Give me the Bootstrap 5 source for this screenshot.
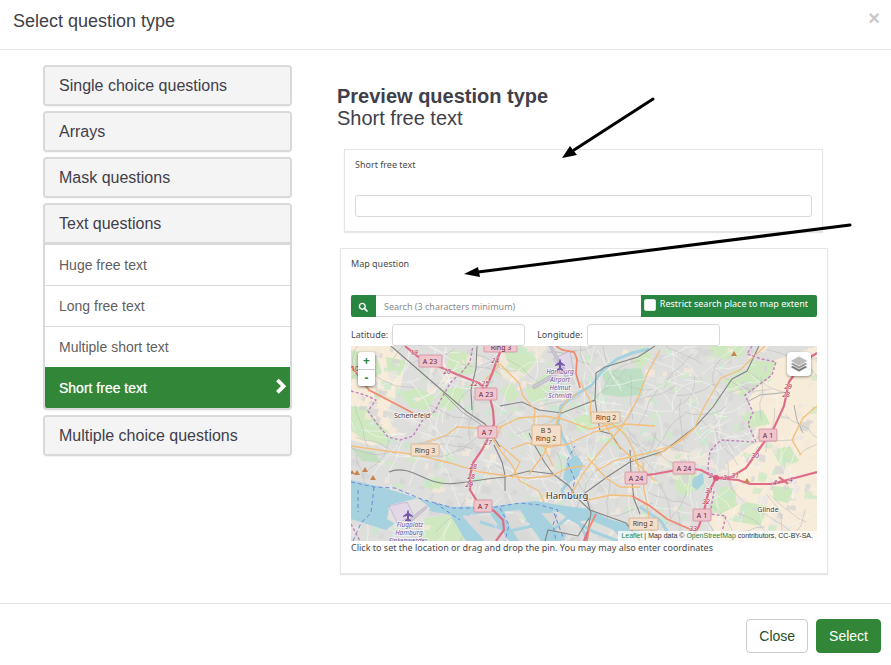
<!DOCTYPE html>
<html lang="en">
<head>
<meta charset="utf-8">
<meta name="viewport" content="width=device-width, initial-scale=1">
<title>Select question type</title>
<link href="https://cdn.jsdelivr.net/npm/bootstrap@5.3.0/dist/css/bootstrap.min.css" rel="stylesheet">
<style>
  body { font-family: "Liberation Sans", Arial, sans-serif; font-size: 14px; color: #41404a; background: #fff; }
  h1, h2, h3, p { margin: 0; }
  .dialog-head { padding: 9px 11px 16px 13px; border-bottom: 1px solid #e5e5e5; }
  .dialog-head h1 { font-size: 18px; line-height: 24px; font-weight: 400; }
  .close-x { border: 0; background: none; padding: 0; font-size: 20px; line-height: 18px; font-weight: 700; color: #c9c9c9; }
  .dialog-main { padding: 15px 0 29px; }
  .type-col { padding-left: 43px; padding-right: 5px; }
  .preview-col { padding: 20px 63px 0 40px; }
  .type-group { border: 2px solid #d9d9d9; border-radius: 4px; box-shadow: 0 1px 1px #0000000d; margin-bottom: 5px; overflow: hidden; }
  .type-toggle { display: block; width: 100%; border: 0; background: #f4f4f4; text-align: left; font-size: 16px; line-height: 22px; padding: 8px 14px 7px; color: #41404a; }
  .type-open .type-toggle { border-bottom: 3px solid #d9d9d9; }
  .type-open .list-group-item { border-color: #d9d9d9; color: #5f5f5f; padding: 10px 3px 10px 14px; line-height: 20px; }
  .type-open .list-group-item.active { background: #328637; border-color: #328637; color: #fff; text-shadow: 0 0 1px #ffffff99; }
  .preview-col h2 { font-size: 20px; line-height: 22px; font-weight: 700; }
  .preview-col h3 { font-size: 20px; line-height: 22px; font-weight: 400; }
  .sample { font-family: "Noto Sans", sans-serif; font-size: 9px; line-height: 14px; color: #4a4a4a; border: 1px solid #e6e6e6; box-shadow: 0 1px 1px #00000018; }
  .sample-text { margin: 20px 5px 16px 7px; padding: 8px 10px 14px; }
  .sample-map { margin-left: 3px; padding: 8px 10px 18px; }
  .sample input[type=text] { font-size: 9px; line-height: 14px; height: 22px; padding: 3px 8px; border: 1px solid #d9d9d9; border-radius: 3px; min-width: 0; color: #555; background: #fff; }
  .sample input::placeholder { color: #8a8a8a; }
  .sample-text input { margin-top: 23px; }
  .search-row { margin-top: 24px; }
  .sample .search-row input[type=text] { border-radius: 0; border-left: 0; border-right: 0; }
  .search-btn { width: 25px; border: 0; padding: 0; background: #298641; border-radius: 2px 0 0 2px; }
  .restrict { background: #298641; color: #fff; padding: 2px 9px 4px 3px; border-radius: 0 2px 2px 0; }
  .restrict input { appearance: none; width: 12px; height: 12px; margin: 2px 4px 0 0; background: #fff; border: 1px solid #dfe9df; border-radius: 2px; }
  .coord-row { padding: 7px 0 0; }
  .coord-row input { width: 133px; }
  .map-box { height: 195px; overflow: hidden; }
  .map-box > svg { width: 100%; height: 195px; }
  .zoom-ctl { position: absolute; left: 7px; top: 6px; width: 17px; border-radius: 3px; overflow: hidden; box-shadow: 0 1px 3px #00000088; }
  .zoom-ctl button { border: 0; background: #fff; color: #298641; font-weight: 700; font-size: 12px; line-height: 16px; height: 17px; padding: 0; }
  .zoom-ctl button + button { border-top: 1px solid #ccc; }
  .layer-btn { position: absolute; right: 6px; top: 6px; width: 24px; height: 24px; border: 0; padding: 0; border-radius: 4px; background: #fff; box-shadow: 0 1px 3px #00000066; }
  .credit { position: absolute; right: 0; bottom: 0; font: 7px/10px "Liberation Sans", Arial, sans-serif; background: #ffffffb8; padding: 0 4px 0 3px; color: #333; }
  .credit a { color: #298641; text-decoration: none; }
  .pointers { position: absolute; left: 0; top: 0; width: 594px; height: 240px; pointer-events: none; overflow: visible; }
  .dialog-foot { border-top: 1px solid #e5e5e5; padding: 15px 10px 12px; }
  .dialog-foot .btn { font-size: 14px; line-height: 20px; padding: 6px 12px; border-radius: 4px; }
  .dialog-foot .btn-close-dialog { border-color: #ccc; color: #274e29; background: #fff; }
  .dialog-foot .btn-select { background: #328637; border-color: #328637; color: #fff; }
</style>
<script src="https://cdn.jsdelivr.net/npm/bootstrap@5.3.0/dist/js/bootstrap.bundle.min.js"></script>
</head>
<body>
<header class="dialog-head d-flex justify-content-between align-items-start">
  <h1>Select question type</h1>
  <button class="close-x" type="button" aria-label="Close dialog">×</button>
</header>

<main class="dialog-main row g-0">
  <nav class="type-col col-4" aria-label="Question types">
    <div class="type-group"><button class="type-toggle" type="button">Single choice questions</button></div>
    <div class="type-group"><button class="type-toggle" type="button">Arrays</button></div>
    <div class="type-group"><button class="type-toggle" type="button">Mask questions</button></div>
    <div class="type-group type-open">
      <button class="type-toggle" type="button" aria-expanded="true">Text questions</button>
      <div class="list-group list-group-flush">
        <a href="#" class="list-group-item">Huge free text</a>
        <a href="#" class="list-group-item">Long free text</a>
        <a href="#" class="list-group-item">Multiple short text</a>
        <a href="#" class="list-group-item active d-flex justify-content-between">Short free text
          <svg width="13" height="17" viewBox="0 0 13 17" aria-hidden="true"><path d="M3.400 2L9.600 8.200L3.400 14.400" fill="none" stroke="#fff" stroke-width="3.800"/></svg></a>
      </div>
    </div>
    <div class="type-group"><button class="type-toggle" type="button">Multiple choice questions</button></div>
  </nav>

  <section class="preview-col col-8 position-relative">
    <h2>Preview question type</h2>
    <h3>Short free text</h3>

    <div class="sample sample-text">
      <label for="short" class="d-block">Short free text</label>
      <input type="text" id="short" class="w-100 d-block">
    </div>

    <div class="sample sample-map">
      <p>Map question</p>
      <div class="search-row d-flex">
        <button class="search-btn" type="button" aria-label="Search">
          <svg width="10" height="10" viewBox="0 0 10 10"><circle cx="4.300" cy="4.300" r="2.900" fill="none" stroke="#fff" stroke-width="1.400"/><path d="M6.400 6.400L9 9" stroke="#fff" stroke-width="1.700" stroke-linecap="round"/></svg>
        </button>
        <input type="text" class="flex-grow-1" placeholder="Search (3 characters minimum)" aria-label="Search place">
        <label class="restrict d-flex text-nowrap"><input type="checkbox">Restrict search place to map extent</label>
      </div>
      <div class="coord-row d-flex align-items-center">
        <label for="lat" class="me-1">Latitude:</label><input type="text" id="lat">
        <label for="lng" class="ms-2 ps-1 me-1">Longitude:</label><input type="text" id="lng">
      </div>
      <div class="map-box position-relative">
        <svg class="d-block" viewBox="351 346 466 195" preserveAspectRatio="xMidYMid slice" font-family="Noto Sans, sans-serif" aria-label="Map of Hamburg">
          <rect x="351" y="346" width="466" height="195" fill="#dededd"/>
          <!-- farmland and suburbs -->
          <g fill="#f7ebd9">
            <path d="M351 346H393L405 365 400 390 386 412 396 435 373 446 351 440Z"/>
            <path d="M775 360L817 346V541H720L708 520 735 490 725 465 752 444 757 422 748 400Z"/>
            <path d="M500 346H548L530 372 514 384 500 376Z" opacity=".7"/>
            <path d="M655 446L705 452 720 470 690 462 660 470Z" opacity=".6"/>
          </g>
          <g fill="#cfe8c0">
            <path d="M351 350L376 354 382 373 366 382 351 378ZM351 406L368 407 378 424 392 434 386 446 360 438 351 430ZM386 357L407 361 400 376 388 372ZM400 392L420 388 436 397 427 410 410 408ZM450 350L470 353 474 373 459 375 447 366ZM440 390L462 386 466 397 451 411 439 408Z"/>
            <path d="M503 348L521 346 538 360 525 374 510 367ZM525 388L548 372 557 382 540 402 529 401ZM500 390L512 382 520 396 508 403ZM572 419L590 413 594 427 578 433Z"/>
            <path d="M752 361L776 362 770 378 744 396 728 391 723 379 740 379ZM708 346L744 346 745 355 728 361 714 355ZM632 362L645 350 652 355 642 368ZM740 414L763 410 770 424 750 428Z"/>
            <path d="M721 487L734 486 738 505 719 515 709 508ZM742 501L767 506 761 526 739 522ZM772 450L790 446 799 461 782 468ZM772 486L794 488 788 503 774 500ZM432 476L446 480 440 492 423 487ZM425 518L458 514 463 541 422 541ZM675 471L697 474 701 486 688 495 676 491Z"/>
          </g>
          <g id="patches"></g>
          <path d="M600 371L641 368 645 382 641 395 621 397 601 394 605 383Z" fill="#bfdfc4"/>
          <path d="M351 448L374 452 382 463 362 461Z" fill="#c4dfc0"/>
          <g id="streets" fill="none" stroke-width=".6"></g>

          <!-- river, harbour and lakes -->
          <g fill="#a6d1df">
            <path d="M351 480L385 488 420 499 452 507 495 506 535 501 565 506 590 509 590 514 560 512 530 509 498 512 457 516 435 512 405 505 388 508 395 523 386 530 351 519Z"/>
            <path d="M449 513L470 514 484 541H466ZM490 514L503 509 519 541H509ZM520 510L536 507 552 541H541ZM536 507L550 507 566 536 561 541H552Z"/>
            <path d="M567 461L577 455 583 464 578 477 569 483 563 479ZM693 478L703 473 704 483 697 490 692 486Z"/>
            <path d="M558 511L590 510 609 519 627 524 640 530 638 537 609 528 590 520 573 522Z"/>
          </g>
          <path d="M649 349L632 353 617 359 602 371 592 385 574 396 561 406 558 423 562 436 568 447 574 459M569 481L562 490 566 500" fill="none" stroke="#a6d1df" stroke-width="3"/>
          <g fill="#e3e0e0">
            <path d="M390 505L418 498 430 508 426 518 401 527 387 519Z"/>
            <path d="M462 516L489 515 507 541H485ZM504 517L515 513 535 541H519ZM541 513L555 513 569 531 560 534Z" fill="#d9d9d8"/>
          </g>
          <g fill="none" stroke="#a6d1df" stroke-width="3">
            <path d="M480 522L510 531 532 526 550 541M526 520L553 530 568 517 594 532 618 541M577 518L587 538M605 520L626 541M640 507L661 521 671 538"/>
          </g>
          <path d="M464 515L490 541M486 514L506 541" fill="none" stroke="#e9d6e8"/>
          <path d="M351 482L374 487 395 488 421 499 453 508 490 508 520 503 540 505 558 510 553 525 556 541M374 487L371 513 361 523 353 541M358 490V512M435 503L460 520M500 508L509 525 505 541M570 500L575 480 567 461 575 446M554 513L564 540" fill="none" stroke="#6989dc" stroke-dasharray="4 3"/>

          <!-- airports -->
          <g fill="#e2d7e8" stroke="#b8b0c4" stroke-width=".7">
            <path d="M553 359L570 351 574 374 562 371Z"/><path d="M389 506L407 502 413 514 398 524Z"/>
            <path d="M532 386L564 367 566 370 534 389ZM549 346H552L569 378H566ZM407 521L426 506 427 508 410 523Z" fill="#cbc8d1"/>
          </g>

          <!-- rail -->
          <g fill="none" stroke="#848484" stroke-width="1.100">
            <path d="M391 346L422 373 445 393 467 412 485 424 500 447M477 346L476 368 471 390 472 410M494 445L502 462 505 475 505 491M389 472C405 465 419 477 436 482S470 480 505 477L529 471 553 474 569 486 578 499 590 510 626 523 640 541"/>
            <path d="M500 406L522 402 539 410 562 413 595 400 596 373 605 367 638 357 655 346M595 400L600 431 611 434 621 449M759 346L747 371 732 379 713 407 694 428 664 451 630 462 607 477 585 493 591 513 586 541M630 450L631 474 634 499 640 514M553 474L545 463 535 446 529 433M545 541L548 530 578 536 589 518"/>
            <path d="M443 393L462 412 480 424 494 441M392 346V339M747 402L760 395 790 392M794 405L797 420 803 433" stroke="#9d9d9d" stroke-width=".8"/>
          </g>

          <!-- main roads -->
          <g fill="none" stroke="#f3bf7b" stroke-width="1.300">
            <path d="M425 442L447 435 457 427 475 428 500 427 519 418 544 416 562 419 590 429 612 424 625 434 634 451 642 481"/>
            <path d="M500 364L519 383 523 396 535 410 533 431 545 449 553 466M351 446L379 450 417 455 450 463 480 472 507 476 529 478 551 476 568 468 585 466"/>
            <path d="M580 382L591 402 590 414 606 426 616 443 637 463 655 481M660 350L647 374 638 398 622 427 603 448 584 472 572 493"/>
            <path d="M765 346L740 370 721 378 704 407 694 429 672 446 644 454 616 460 596 471M560 412L567 400 578 393M500 445L520 462 512 478M529 474L544 454 553 432 560 412"/>
            <path d="M511 449L527 443 549 447 568 444 594 432 626 424 655 426M501 427L494 441 503 454 512 465 520 481 539 491 544 502M643 462L644 489 648 512 653 534M588 458L606 478 620 487 640 487M572 493L588 500 611 495 633 496"/>
            <path d="M485 380L498 367 500 346M817 406L803 418 792 440 801 455M655 456L682 440 694 428"/>
          </g>
          <g fill="none" stroke="#ef8a70" stroke-width="1.800">
            <path d="M351 366L369 390 390 401 413 413M556 346L562 350 574 352 577 359 576 373 580 388M632 496L650 506 667 519 694 531M587 541L589 528 596 514"/>
          </g>

          <!-- motorways -->
          <g fill="none" stroke="#e06c88" stroke-width="2.200">
            <path d="M405 346L417 356 440 367 456 374 479 383 489 394 493 410 494 424 488 438 482 450 473 463 470 476 470 490 477 501 494 511 503 520 504 530 496 541"/>
            <path d="M486 388L492 374 498 357 503 346M817 353L803 362 789 382 784 406 773 430 760 448 746 468 731 477 716 478 708 494 704 511 699 526 693 536M630 477L655 474 687 468 701 470 716 478 738 480 750 484 771 484 791 479 817 472"/>
            <path d="M773 484L787 481M779 477L788 484M584 541L588 531"/>
          </g>
          <circle cx="716" cy="478" r="3" fill="#d9587c"/>
          <g fill="none" stroke="#c283bc" stroke-width="1.400" stroke-dasharray="3 2">
            <path d="M351 391L365 395 376 400 368 411 378 425 388 437 400 440 413 436 422 421 435 411 440 401 451 382 462 372 470 362 473 346"/>
            <path d="M752 346L747 354 762 359 776 362 772 375 745 395 753 412 748 424 756 442 721 440 710 451 708 467 709 478M714 491L710 514 726 516 721 536M351 524L360 541"/>
          </g>
          <g fill="#c6854e"><path d="M731 356l3-5 3 5ZM744 483l3-5 3 5ZM362 472l3-5 3 5ZM370 480l3-5 3 5ZM354 475l3-5 3 5ZM350 474l2-4 3 4Z"/></g>

          <!-- road shields -->
          <g stroke-width=".8" font-size="7" text-anchor="middle">
            <g fill="#efc5ce" stroke="#d58b9d">
              <rect x="419" y="355" width="23" height="12" rx="1"/><rect x="475" y="388" width="22" height="12" rx="1"/><rect x="478" y="426" width="19" height="12" rx="1"/><rect x="474" y="500" width="18" height="12" rx="1"/><rect x="484" y="340" width="33" height="12" rx="1"/><rect x="759" y="429" width="18" height="12" rx="1"/><rect x="673" y="462" width="22" height="12" rx="1"/><rect x="625" y="472" width="22" height="12" rx="1"/><rect x="693" y="509" width="18" height="12" rx="1"/>
            </g>
            <g fill="#f3dfc9" stroke="#d4ad83">
              <rect x="591" y="412" width="29" height="11" rx="1"/><rect x="532" y="425" width="29" height="20" rx="1"/><rect x="411" y="444" width="28" height="12" rx="1"/><rect x="629" y="518" width="29" height="12" rx="1"/>
            </g>
            <g fill="#6b2336">
              <text x="430" y="364">A 23</text><text x="486" y="397">A 23</text><text x="487" y="435">A 7</text><text x="483" y="509">A 7</text><text x="501" y="350">Ring 3</text><text x="768" y="438">A 1</text><text x="684" y="471">A 24</text><text x="636" y="481">A 24</text><text x="702" y="518">A 1</text>
            </g>
            <g fill="#5c3c1b">
              <text x="606" y="420">Ring 2</text><text x="546" y="433">B 5</text><text x="546" y="441">Ring 2</text><text x="425" y="453">Ring 3</text><text x="643" y="526">Ring 2</text>
            </g>
            <g fill="#ad3151" font-style="italic" stroke="#fff" stroke-width="1" stroke-opacity=".6" paint-order="stroke">
              <text x="414" y="355">19</text><text x="447" y="374">20</text><text x="474" y="386">22</text><text x="485" y="386">25</text><text x="495" y="363">24</text><text x="488" y="445">27</text><text x="473" y="469">28</text><text x="471" y="479">28</text><text x="469" y="487">29</text><text x="788" y="389">29</text><text x="786" y="397">28</text><text x="755" y="458">30</text><text x="735" y="478">31</text><text x="725" y="480">3</text><text x="711" y="478">2</text><text x="709" y="493">31</text><text x="706" y="504">32</text><text x="693" y="531">33</text><text x="775" y="485">4</text><text x="791" y="482">4</text>
            </g>
            <text x="355" y="371" fill="#ad3151">10</text>
          </g>
          <!-- place names -->
          <g text-anchor="middle" stroke="#fff" stroke-width="1.500" stroke-opacity=".7" paint-order="stroke">
            <g font-size="7" fill="#444"><text x="412" y="418">Schenefeld</text><text x="768" y="512">Glinde</text></g>
            <text x="567" y="499" font-size="9.500" fill="#333">Hamburg</text>
            <g font-size="6.500" font-style="italic" fill="#6b55a2">
              <text x="560" y="374">Hamburg</text><text x="560" y="382">Airport</text><text x="560" y="390">Helmut</text><text x="560" y="398">Schmidt</text>
              <text x="410" y="527">Flugplatz</text><text x="409" y="535">Hamburg</text><text x="408" y="543">Finkenwerder</text>
            </g>
          </g>
          <g fill="#7359aa">
            <path id="plane" d="M560 359q1 0 1 3l4 3v1l-4-1v3l2 1v1h-6v-1l2-1v-3l-4 1v-1l4-3q0-3 1-3Z"/>
            <use href="#plane" x="-152" y="151"/>
          </g>
        </svg>
        <div class="zoom-ctl d-flex flex-column"><button type="button" aria-label="Zoom in">+</button><button type="button" aria-label="Zoom out">-</button></div>
        <button class="layer-btn d-flex align-items-center justify-content-center" type="button" aria-label="Layers">
          <svg width="20" height="20" viewBox="0 0 20 20"><g stroke="#fff" stroke-width=".7"><path d="M1 13L10 8.500 19 13 10 18Z" fill="#777"/><path d="M1 10L10 5.500 19 10 10 15Z" fill="#999"/><path d="M1 7L10 2 19 7 10 12Z" fill="#bcbcbc"/></g></svg>
        </button>
        <div class="credit text-nowrap"><a href="#">Leaflet</a> | Map data © <a href="#">OpenStreetMap</a> contributors, CC-BY-SA.</div>
      </div>
      <p>Click to set the location or drag and drop the pin. You may may also enter coordinates</p>
    </div>

    <svg class="pointers" viewBox="297 65 594 240" aria-hidden="true">
      <g stroke="#000" stroke-width="3" stroke-linecap="round"><path d="M653 99L574 150M850 225L478 272"/></g>
      <path d="M562 158L570 146 577 155ZM464 274L478 267 480 277Z"/>
    </svg>
  </section>
</main>

<footer class="dialog-foot d-flex justify-content-end">
  <button type="button" class="btn btn-close-dialog me-2">Close</button>
  <button type="button" class="btn btn-select">Select</button>
</footer>

<script>
  // Side streets and small land-use plots, from a fixed seed so that the map is stable.
  let seed = 41;
  const rnd = () => (seed = (seed * 16807) % 2147483647) / 2147483647;
  const ns = "http://www.w3.org/2000/svg";
  const add = (id, attrs) => {
    const p = document.createElementNS(ns, "path");
    for (const k in attrs) p.setAttribute(k, attrs[k]);
    document.getElementById(id).append(p);
  };
  const plots = ["#cdeac4", "#d6d6d6", "#f5e8d8", "#c8e8cc", "#e8e6e1", "#d4d4d4"];
  for (let i = 0; i < 620; i++) {
    const x = 351 + rnd() * 466, y = 346 + rnd() * 195, w = 2 + rnd() * 8, h = 2 + rnd() * 6;
    add("patches", { d: `M${x} ${y}l${w} ${rnd() * 3}l${-rnd() * 3} ${h}l${-w} ${-rnd() * 2}Z`, fill: plots[i % 6], opacity: 0.75 });
  }
  for (let i = 0; i < 260; i++) {
    let x = 351 + rnd() * 466, y = 346 + rnd() * 195, a = rnd() * 6.28, d = `M${x} ${y}`;
    for (let j = 0; j < 5; j++) { a += (rnd() - 0.5) * 0.8; d += `l${Math.cos(a) * 9} ${Math.sin(a) * 9}`; }
    add("streets", { d, stroke: i % 3 ? "#f6f6f4" : "#bdbdbd" });
  }
</script>
</body>
</html>
